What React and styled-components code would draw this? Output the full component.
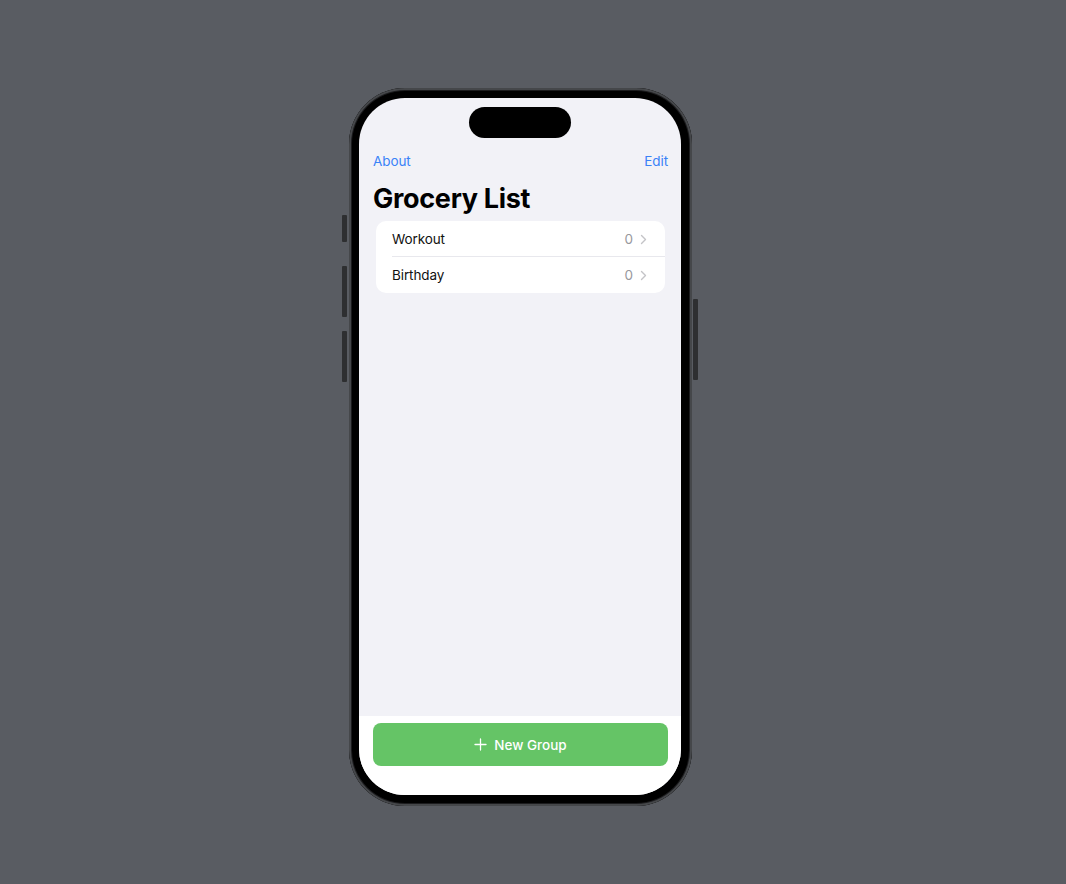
import React from "react";
import styled, { createGlobalStyle } from "styled-components";

const Global = createGlobalStyle`
  html, body { margin: 0; padding: 0; background: #595c62; }
  body { font-family: Inter, "Noto Sans", sans-serif; -webkit-font-smoothing: antialiased; }
`;

const Stage = styled.div`
  width: 1066px;
  height: 884px;
  box-sizing: border-box;
  padding: 88px 0 0 349px;
  background: #595c62;
`;

const Frame = styled.div`
  position: relative;
  width: 343px;
  height: 718px;
  box-sizing: border-box;
  padding: 10px 11px 11px 10px;
  border-radius: 56px;
  background: #000;
  box-shadow: inset 0 0 0 2px #45474a, inset 0 0 0 3px #1c1c1e;
  display: flex;
`;

const SideButton = styled.div`
  position: absolute;
  width: 5px;
  background: #2e2f31;
  border-radius: 1px;
  top: ${(p) => p.$top}px;
  height: ${(p) => p.$h}px;
  ${(p) => (p.$right ? "right: -6px;" : "left: -7px;")}
`;

const Screen = styled.div`
  flex: 1;
  display: flex;
  flex-direction: column;
  background: #f2f2f7;
  border-radius: 46px;
  overflow: hidden;
`;

const IslandRow = styled.div`
  display: flex;
  justify-content: center;
  padding-top: 9px;
`;

const Island = styled.div`
  width: 102px;
  height: 31px;
  border-radius: 16px;
  background: #000;
`;

const NavBar = styled.div`
  display: flex;
  justify-content: space-between;
  align-items: center;
  padding: 0 13px 0 14px;
  margin-top: 14px;
  height: 18px;
`;

const NavButton = styled.span`
  font-size: 13.5px;
  color: #3a82f7;
  letter-spacing: -0.1px;
`;

const Title = styled.h1`
  margin: 14px 0 0 14px;
  font-size: 27px;
  line-height: 30px;
  font-weight: 700;
  color: #000;
  letter-spacing: -0.3px;
`;

const Content = styled.div`
  flex: 1;
`;

const Card = styled.div`
  margin: 7px 16px 0 17px;
  background: #fff;
  border-radius: 10px;
  overflow: hidden;
`;

const Row = styled.div`
  display: flex;
  align-items: center;
  height: 36px;
  padding: 0 18px 0 16px;
  position: relative;
  ${(p) =>
    p.$sep &&
    `&::after { content: ""; position: absolute; left: 16px; right: 0; bottom: 0; height: 1px; background: #e8e8ed; }`}
`;

const RowLabel = styled.span`
  flex: 1;
  font-size: 13.5px;
  color: #111;
  letter-spacing: -0.1px;
`;

const Count = styled.span`
  font-size: 13.5px;
  color: #98989d;
  margin-right: 7px;
`;

const BottomBar = styled.div`
  background: #fff;
  height: 79px;
  box-sizing: border-box;
  padding: 7px 13px 0 14px;
`;

const GreenButton = styled.button`
  width: 100%;
  height: 43px;
  border: none;
  border-radius: 8px;
  background: #65c466;
  color: #fff;
  font-family: Inter, "Noto Sans", sans-serif;
  font-size: 13.5px;
  font-weight: 500;
  display: flex;
  align-items: center;
  justify-content: center;
  gap: 7px;
  padding: 0;
`;

const Chevron = () => (
  <svg width="7" height="11" viewBox="0 0 7 11" fill="none">
    <path d="M1.5 1.5 L5.5 5.5 L1.5 9.5" stroke="#c4c4c7" strokeWidth="1.4" strokeLinecap="round" strokeLinejoin="round" />
  </svg>
);

const Plus = () => (
  <svg width="13" height="13" viewBox="0 0 13 13" fill="none">
    <path d="M6.5 1 V12 M1 6.5 H12" stroke="#fff" strokeWidth="1.3" strokeLinecap="round" />
  </svg>
);

const groups = [
  { name: "Workout", count: 0 },
  { name: "Birthday", count: 0 },
];

export default function App() {
  return (
    <>
      <Global />
      <Stage>
        <Frame>
          <SideButton $top={127} $h={27} />
          <SideButton $top={178} $h={51} />
          <SideButton $top={243} $h={51} />
          <SideButton $right $top={211} $h={81} />
          <Screen>
            <IslandRow>
              <Island />
            </IslandRow>
            <NavBar>
              <NavButton>About</NavButton>
              <NavButton>Edit</NavButton>
            </NavBar>
            <Title>Grocery List</Title>
            <Content>
              <Card>
                {groups.map((g, i) => (
                  <Row key={g.name} $sep={i < groups.length - 1}>
                    <RowLabel>{g.name}</RowLabel>
                    <Count>{g.count}</Count>
                    <Chevron />
                  </Row>
                ))}
              </Card>
            </Content>
            <BottomBar>
              <GreenButton>
                <Plus />
                New Group
              </GreenButton>
            </BottomBar>
          </Screen>
        </Frame>
      </Stage>
    </>
  );
}
